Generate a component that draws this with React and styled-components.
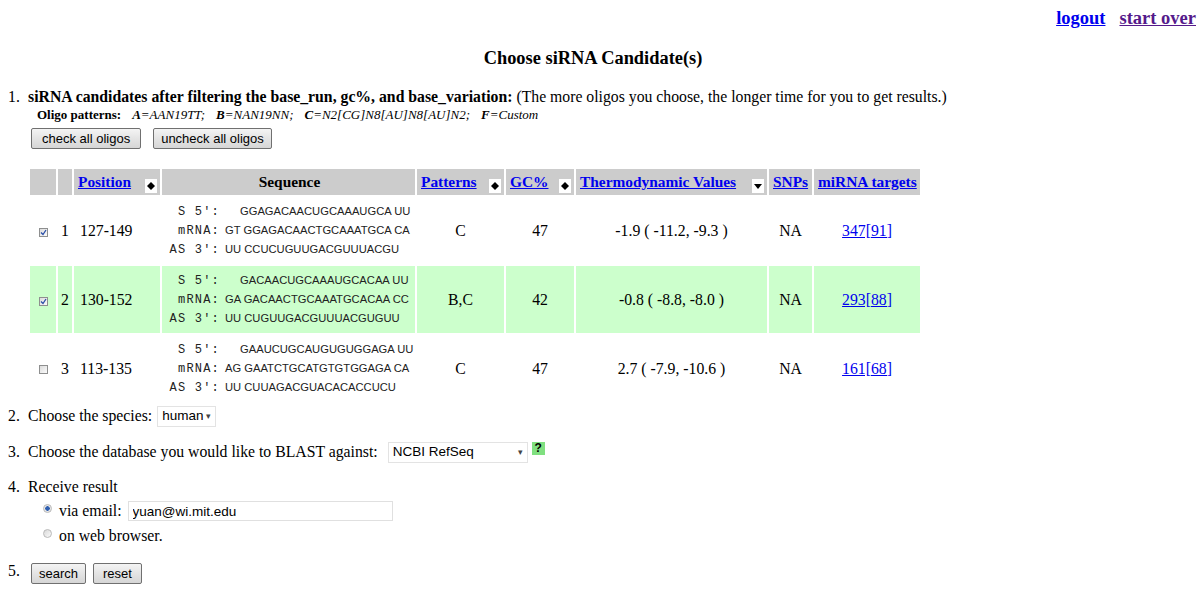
import React from 'react';
import styled, { createGlobalStyle } from 'styled-components';

const GlobalStyle = createGlobalStyle`
  body {
    margin: 0;
    background: #fff;
    color: #000;
    font-family: 'Liberation Serif', 'Times New Roman', serif;
    font-size: 15.75px;
  }
`;

const candidates = [
  {
    id: 1,
    checked: true,
    position: '127-149',
    sense: 'GGAGACAACUGCAAAUGCA UU',
    mrna: 'GT GGAGACAACTGCAAATGCA CA',
    anti: 'UU CCUCUGUUGACGUUUACGU',
    patterns: 'C',
    gc: 47,
    thermo: '-1.9 ( -11.2, -9.3 )',
    snps: 'NA',
    targets: '347[91]',
  },
  {
    id: 2,
    checked: true,
    highlight: true,
    position: '130-152',
    sense: 'GACAACUGCAAAUGCACAA UU',
    mrna: 'GA GACAACTGCAAATGCACAA CC',
    anti: 'UU CUGUUGACGUUUACGUGUU',
    patterns: 'B,C',
    gc: 42,
    thermo: '-0.8 ( -8.8, -8.0 )',
    snps: 'NA',
    targets: '293[88]',
  },
  {
    id: 3,
    checked: false,
    position: '113-135',
    sense: 'GAAUCUGCAUGUGUGGAGA UU',
    mrna: 'AG GAATCTGCATGTGTGGAGA CA',
    anti: 'UU CUUAGACGUACACACCUCU',
    patterns: 'C',
    gc: 47,
    thermo: '2.7 ( -7.9, -10.6 )',
    snps: 'NA',
    targets: '161[68]',
  },
];

function SortMark({ down }) {
  return (
    <SortBox>
      <svg width='12' height='14' viewBox='0 0 12 14'>
        {down ? (
          <path d='M2 5 L10 5 L6 10 Z' fill='#000' />
        ) : (
          <path d='M6 3 L10 7 L6 11 L2 7 Z' fill='#000' />
        )}
      </svg>
    </SortBox>
  );
}

function CheckMark({ checked }) {
  return (
    <CheckBox>
      {checked && (
        <svg width='7' height='7' viewBox='0 0 7 7'>
          <path d='M1 3.5 L3 5.5 L6 1' fill='none' stroke='#2a4fa8' strokeWidth='1.3' />
        </svg>
      )}
    </CheckBox>
  );
}

function SeqLines({ sense, mrna, anti }) {
  return (
    <SeqBlock>
      <SeqLine>
        <SeqLabel>S 5':</SeqLabel>
        <Seq indent>{sense}</Seq>
      </SeqLine>
      <SeqLine>
        <SeqLabel>mRNA:</SeqLabel>
        <Seq>{mrna}</Seq>
      </SeqLine>
      <SeqLine>
        <SeqLabel>AS 3':</SeqLabel>
        <Seq>{anti}</Seq>
      </SeqLine>
    </SeqBlock>
  );
}

export default function App() {
  return (
    <>
      <GlobalStyle />
      <Page>
        <TopLinks>
          <TopLink href='#'>logout</TopLink>
          <TopLink href='#' visited>
            start over
          </TopLink>
        </TopLinks>
        <Title>Choose siRNA Candidate(s)</Title>

        <Step>
          <Num>1.</Num>
          <StepBody>
            <div>
              <b>siRNA candidates after filtering the base_run, gc%, and base_variation:</b> (The
              more oligos you choose, the longer time for you to get results.)
            </div>
            <Patterns>
              <b>Oligo patterns:</b>
              <PatternItem>
                <b>A</b>=AAN19TT;
              </PatternItem>
              <PatternItem>
                <b>B</b>=NAN19NN;
              </PatternItem>
              <PatternItem>
                <b>C</b>=N2[CG]N8[AU]N8[AU]N2;
              </PatternItem>
              <PatternItem>
                <b>F</b>=Custom
              </PatternItem>
            </Patterns>
            <ButtonRow gap={12}>
              <Button pad={10}>check all oligos</Button>
              <Button pad={7}>uncheck all oligos</Button>
            </ButtonRow>

            <Table>
              <colgroup>
                <col style={{ width: 26 }} />
                <col style={{ width: 14 }} />
                <col style={{ width: 86 }} />
                <col style={{ width: 253 }} />
                <col style={{ width: 87 }} />
                <col style={{ width: 68 }} />
                <col style={{ width: 191 }} />
                <col style={{ width: 43 }} />
                <col style={{ width: 106 }} />
              </colgroup>
              <thead>
                <tr>
                  <Th />
                  <Th />
                  <Th>
                    <HeadInner>
                      <HeadLink href='#'>Position</HeadLink>
                      <SortMark />
                    </HeadInner>
                  </Th>
                  <Th center>Sequence</Th>
                  <Th>
                    <HeadInner>
                      <HeadLink href='#'>Patterns</HeadLink>
                      <SortMark />
                    </HeadInner>
                  </Th>
                  <Th>
                    <HeadInner>
                      <HeadLink href='#'>GC%</HeadLink>
                      <SortMark />
                    </HeadInner>
                  </Th>
                  <Th>
                    <HeadInner>
                      <HeadLink href='#'>Thermodynamic Values</HeadLink>
                      <SortMark down />
                    </HeadInner>
                  </Th>
                  <Th>
                    <HeadLink href='#'>SNPs</HeadLink>
                  </Th>
                  <Th>
                    <HeadLink href='#'>miRNA targets</HeadLink>
                  </Th>
                </tr>
              </thead>
              <tbody>
                {candidates.map(c => (
                  <Row key={c.id} highlight={c.highlight}>
                    <Td center>
                      <CheckMark checked={c.checked} />
                    </Td>
                    <Td center>{c.id}</Td>
                    <Td pad={6}>{c.position}</Td>
                    <Td pad={5}>
                      <SeqLines sense={c.sense} mrna={c.mrna} anti={c.anti} />
                    </Td>
                    <Td center>{c.patterns}</Td>
                    <Td center>{c.gc}</Td>
                    <Td center>{c.thermo}</Td>
                    <Td center>{c.snps}</Td>
                    <Td center>
                      <DataLink href='#'>{c.targets}</DataLink>
                    </Td>
                  </Row>
                ))}
              </tbody>
            </Table>
          </StepBody>
        </Step>

        <FormStep top={1}>
          <Num>2.</Num>
          <span>Choose the species:</span>
          <Select width={59} gap={5}>
            <span>human</span>
            <Arrow>▾</Arrow>
          </Select>
        </FormStep>

        <FormStep top={14}>
          <Num>3.</Num>
          <span>Choose the database you would like to BLAST against:</span>
          <Select width={140} gap={10}>
            <span>NCBI RefSeq</span>
            <Arrow>▾</Arrow>
          </Select>
          <Help>?</Help>
        </FormStep>

        <FormStep top={13}>
          <Num>4.</Num>
          <span>Receive result</span>
        </FormStep>
        <OptionRow top={2}>
          <Radio selected />
          <span>via email:</span>
          <TextInput defaultValue='yuan@wi.mit.edu' />
        </OptionRow>
        <OptionRow top={3}>
          <Radio />
          <span>on web browser.</span>
        </OptionRow>

        <FormStep top={13}>
          <Num>5.</Num>
          <ButtonRow gap={7}>
            <Button pad={7}>search</Button>
            <Button pad={9}>reset</Button>
          </ButtonRow>
        </FormStep>
      </Page>
    </>
  );
}

const Page = styled.div`
  padding: 8px 4px 20px 8px;
`;

const TopLinks = styled.div`
  display: flex;
  justify-content: flex-end;
  gap: 14px;
  line-height: 21px;
`;

const TopLink = styled.a`
  font-size: 18.5px;
  font-weight: bold;
  color: ${props => (props.visited ? '#551a8b' : '#0000ee')};
  text-decoration: underline;
`;

const Title = styled.div`
  margin-top: 18px;
  padding-right: 18px;
  text-align: center;
  font-size: 18.4px;
  font-weight: bold;
  line-height: 22px;
`;

const Step = styled.div`
  display: flex;
  margin-top: 18px;
  line-height: 20px;
`;

const Num = styled.span`
  flex: 0 0 20px;
  width: 20px;
`;

const StepBody = styled.div`
  flex: 1;
`;

const Patterns = styled.div`
  margin-left: 9px;
  font-size: 13px;
  line-height: 16px;
`;

const PatternItem = styled.span`
  margin-left: 11px;
  font-style: italic;
`;

const ButtonRow = styled.div`
  display: flex;
  gap: ${props => props.gap}px;
  margin: 5px 0 0 3px;
`;

const Button = styled.button`
  height: 21px;
  padding: 0 ${props => props.pad}px;
  border: 1px solid #707070;
  border-radius: 2px;
  background: linear-gradient(#f4f4f4, #e4e4e4 50%, #d6d6d6);
  font-family: 'Liberation Sans', Arial, sans-serif;
  font-size: 13px;
  color: #000;
  line-height: 19px;
`;

const Table = styled.table`
  margin-top: 18px;
  table-layout: fixed;
  border-collapse: separate;
  border-spacing: 2px;
  width: 894px;
`;

const Th = styled.th`
  height: 26px;
  padding: 0 2px 0 4px;
  background: #cccccc;
  font-size: 15.4px;
  font-weight: bold;
  text-align: ${props => (props.center ? 'center' : 'left')};
  white-space: nowrap;
  vertical-align: middle;
  line-height: 20px;
`;

const HeadInner = styled.div`
  display: flex;
  justify-content: space-between;
  align-items: center;
`;

const HeadLink = styled.a`
  color: #0000ee;
  text-decoration: underline;
`;

const SortBox = styled.span`
  display: flex;
  margin: 8px 1px 0 0;
  background: #fff;
`;

const Row = styled.tr`
  background: ${props => (props.highlight ? '#ccffcc' : '#fff')};
`;

const Td = styled.td`
  height: 67px;
  padding: 0 0 0 ${props => props.pad || 0}px;
  text-align: ${props => (props.center ? 'center' : 'left')};
  vertical-align: middle;
  white-space: nowrap;
  line-height: 20px;
`;

const DataLink = styled.a`
  color: #0000ee;
  text-decoration: underline;
`;

const CheckBox = styled.span`
  display: inline-flex;
  align-items: center;
  justify-content: center;
  width: 9px;
  height: 9px;
  margin-top: 3px;
  border: 1px solid #8e8f8f;
  background: linear-gradient(135deg, #dcdcdc, #fbfbfb);
  box-sizing: border-box;
`;

const SeqBlock = styled.div`
  display: flex;
  flex-direction: column;
`;

const SeqLine = styled.div`
  display: flex;
  align-items: baseline;
  height: 19px;
  line-height: 19px;
  color: #222;
`;

const SeqLabel = styled.span`
  width: 53px;
  text-align: right;
  font-family: 'Liberation Mono', 'Courier New', monospace;
  font-size: 12px;
  letter-spacing: 1.2px;
  white-space: pre;
`;

const Seq = styled.span`
  margin-left: ${props => (props.indent ? 20 : 5)}px;
  font-family: 'Liberation Sans', Arial, sans-serif;
  font-size: 11.2px;
  white-space: pre;
`;

const FormStep = styled.div`
  display: flex;
  align-items: center;
  margin-top: ${props => props.top}px;
  height: 22px;
  line-height: 20px;
`;

const Select = styled.span`
  display: inline-flex;
  align-items: center;
  justify-content: space-between;
  box-sizing: border-box;
  width: ${props => props.width}px;
  height: 21px;
  margin-left: ${props => props.gap}px;
  padding: 0 4px;
  border: 1px solid #e3e3e3;
  background: #fff;
  font-family: 'Liberation Sans', Arial, sans-serif;
  font-size: 13.5px;
`;

const Arrow = styled.span`
  font-size: 9px;
  color: #444;
`;

const Help = styled.span`
  align-self: flex-start;
  display: inline-flex;
  align-items: center;
  justify-content: center;
  width: 13px;
  height: 13px;
  margin: 1px 0 0 4px;
  background: #80e080;
  font-family: 'Liberation Sans', Arial, sans-serif;
  font-size: 12px;
  font-weight: bold;
  line-height: 13px;
`;

const OptionRow = styled.div`
  display: flex;
  align-items: center;
  gap: 4px;
  margin-top: ${props => props.top}px;
  padding-left: 35px;
  height: 22px;
  line-height: 20px;
`;

const Radio = styled.span`
  width: 7px;
  height: 7px;
  margin: -6px 3px 0 0;
  border-radius: 50%;
  border: 1px solid #b9b9b9;
  background: ${props =>
    props.selected
      ? 'radial-gradient(circle, #2f5fb0 0 2px, #e8e8e8 2.5px)'
      : 'linear-gradient(135deg, #d8d8d8, #fafafa)'};
`;

const TextInput = styled.input`
  box-sizing: border-box;
  width: 265px;
  height: 20px;
  margin-left: 2px;
  padding: 0 4px;
  border: 1px solid #e0e0e0;
  font-family: 'Liberation Sans', Arial, sans-serif;
  font-size: 13.5px;
  color: #000;
  outline: none;
`;
